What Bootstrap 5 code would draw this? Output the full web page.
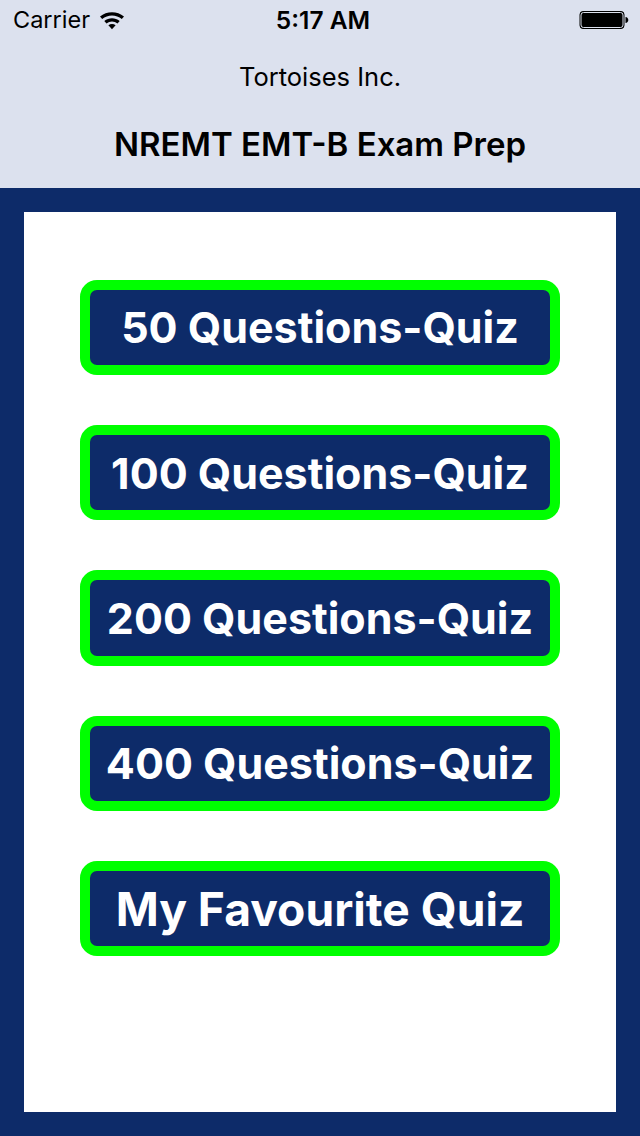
<!DOCTYPE html>
<html lang="en">

<head>
    <meta charset="UTF-8">
    <meta name="viewport" content="width=device-width, initial-scale=1.0">
    <title>NREMT EMT-B Exam Prep</title>
    <link href="https://cdn.jsdelivr.net/npm/bootstrap@5.3.0/dist/css/bootstrap.min.css" rel="stylesheet">
    <style>
        html, body {
            height: 1136px;
            overflow: hidden;
        }

        body {
            background-color: #0d2b69;
            font-family: Inter, "Liberation Sans", sans-serif;
            color: #000;
        }

        .top-bar {
            height: 188px;
            background-color: #dce1ee;
        }

        .status-row {
            height: 40px;
            padding: 0 11px 0 13px;
            font-size: 23.5px;
        }

        .status-left {
            width: 154px;
        }

        .status-right {
            width: 150px;
        }

        .wifi-icon {
            margin-left: 1px;
        }

        .status-time {
            font-size: 24.5px;
            font-weight: 600;
        }

        .vendor-name {
            font-size: 25.5px;
            line-height: 30px;
            margin-top: 22px;
        }

        .app-title {
            font-size: 33px;
            font-weight: 600;
            line-height: 38px;
            margin-top: 33px;
            margin-bottom: 0;
        }

        .quiz-panel {
            height: 900px;
            margin: 24px;
            padding: 68px 56px 0;
            background-color: #fff;
            gap: 50px;
        }

        .quiz-btn {
            height: 95.2px;
            padding: 0;
            background-color: #0d2b69;
            border: 10px solid #00ff00;
            border-radius: 17px;
            color: #fff;
            font-size: 43px;
            font-weight: 700;
            white-space: nowrap;
        }

        .quiz-btn-wide {
            padding-top: 2px;
            font-size: 46.2px;
        }
    </style>
</head>

<body>

    <!-- Status bar and title -->
    <header class="top-bar">
        <div class="status-row d-flex align-items-center justify-content-between">
            <div class="status-left d-flex align-items-center gap-2">
                <span>Carrier</span>
                <svg class="wifi-icon" width="26" height="20" viewBox="0 0 26 20" aria-hidden="true">
                    <path d="M1 6.5C7.6.7 18.4.7 25 6.5l-2.2 2.4C17.3 4.200 8.700 4.200 3.200 8.900Z" fill="#000"/>
                    <path d="M5.300 11C9.900 7.200 16.100 7.200 20.700 11l-2.200 2.400C15.200 10.700 10.800 10.700 7.500 13.400Z" fill="#000"/>
                    <path d="M9.400 15.300C11.600 13.700 14.400 13.700 16.600 15.300L13 19.300Z" fill="#000"/>
                </svg>
            </div>
            <div class="status-time">5:17 AM</div>
            <div class="status-right d-flex justify-content-end">
                <svg width="50" height="20" viewBox="0 0 50 20" aria-hidden="true">
                    <rect x="1" y="1.500" width="44" height="17" rx="3" fill="#000" stroke="#000" stroke-width="1"/>
                    <rect x="2" y="2.500" width="42" height="15" rx="2.500" fill="#000" stroke="#dce1ee" stroke-width="1"/>
                    <path d="M46.500 7c1.800.3 2.800 1.400 2.800 3s-1 2.700-2.800 3Z" fill="#000"/>
                </svg>
            </div>
        </div>
        <div class="vendor-name text-center">Tortoises Inc.</div>
        <h1 class="app-title text-center">NREMT EMT-B Exam Prep</h1>
    </header>

    <!-- Quiz list -->
    <main class="quiz-panel d-flex flex-column">
        <button type="button" class="btn quiz-btn">50 Questions-Quiz</button>
        <button type="button" class="btn quiz-btn">100 Questions-Quiz</button>
        <button type="button" class="btn quiz-btn">200 Questions-Quiz</button>
        <button type="button" class="btn quiz-btn">400 Questions-Quiz</button>
        <button type="button" class="btn quiz-btn quiz-btn-wide">My Favourite Quiz</button>
    </main>

    <script src="https://cdn.jsdelivr.net/npm/bootstrap@5.3.0/dist/js/bootstrap.bundle.min.js"></script>
</body>

</html>
